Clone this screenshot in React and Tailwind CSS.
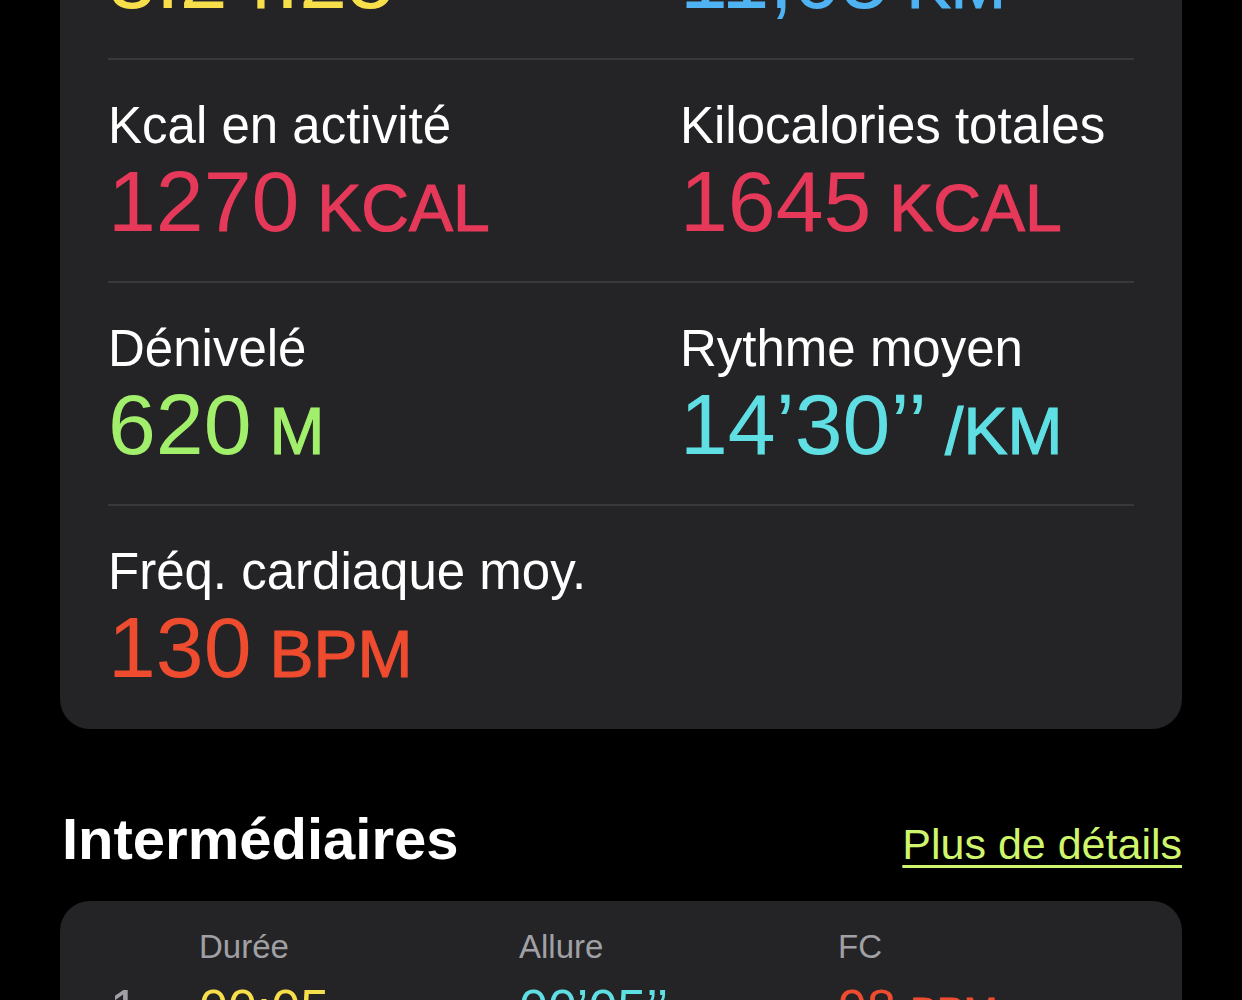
import React from 'react'

const font = { fontFamily: '"Liberation Sans", Arial, sans-serif' }

const rows = [
  [
    { label: 'Durée de l’exercice', value: '3:24:25', unit: '', color: 'text-[#f7df4b]' },
    { label: 'Distance', value: '11,05', unit: 'KM', color: 'text-[#4fb3f3]' },
  ],
  [
    { label: 'Kcal en activité', value: '1270', unit: 'KCAL', color: 'text-[#e6395a]' },
    { label: 'Kilocalories totales', value: '1645', unit: 'KCAL', color: 'text-[#e6395a]' },
  ],
  [
    { label: 'Dénivelé', value: '620', unit: 'M', color: 'text-[#a2ef6b]' },
    { label: 'Rythme moyen', value: '14’30’’', unit: '/KM', color: 'text-[#5fdfe4]' },
  ],
  [
    { label: 'Fréq. cardiaque moy.', value: '130', unit: 'BPM', color: 'text-[#ee4b2f]' },
  ],
]

function Metric({ m }){
  return (
    <div>
      <div className="text-[51px] leading-none text-white">{m.label}</div>
      <div className={`mt-[7px] text-[86px] leading-none whitespace-nowrap ${m.color}`}>
        {m.value}
        {m.unit && <span className="ml-[18px] text-[66px] leading-none [-webkit-text-stroke:1.2px_currentColor]">{m.unit}</span>}
      </div>
    </div>
  )
}

export default function App(){
  return (
    <div className="min-h-[1000px] w-full bg-black overflow-hidden" style={font}>
      <div className="-mt-[163px] px-[60px]">
        <div className="rounded-[30px] bg-[#242426] px-12">
          {rows.map((r, i) => (
            <div key={i} className={`grid grid-cols-[572px_1fr] pt-[40px] h-[223px] ${i < rows.length - 1 ? 'border-b-2 border-[#38383a]' : ''}`}>
              {r.map((m, j) => <Metric key={j} m={m} />)}
            </div>
          ))}
        </div>

        <div className="mt-[81px] flex items-baseline justify-between pl-[2px]">
          <div className="text-[58px] leading-none font-bold text-white">Intermédiaires</div>
          <div className="text-[43px] leading-none text-[#cff56c] underline decoration-[3px] underline-offset-[6px]">Plus de détails</div>
        </div>

        <div className="mt-[33px] rounded-[30px] bg-[#242426] pl-[50px] pt-[29px] pb-10">
          <div className="grid grid-cols-[89px_320px_319px_1fr] text-[33px] leading-none text-[#a0a0a5]">
            <div></div>
            <div>Durée</div>
            <div>Allure</div>
            <div>FC</div>
          </div>
          <div className="mt-[19px] grid grid-cols-[89px_320px_319px_1fr] text-[52px] leading-none">
            <div className="text-[#a0a0a5]">1</div>
            <div className="text-[#f7df4b]">00:05</div>
            <div className="text-[#5fdfe4]">00’05’’</div>
            <div className="text-[#ee4b2f]">98 <span className="text-[40px] [-webkit-text-stroke:1px_currentColor]">BPM</span></div>
          </div>
        </div>
      </div>
    </div>
  )
}
